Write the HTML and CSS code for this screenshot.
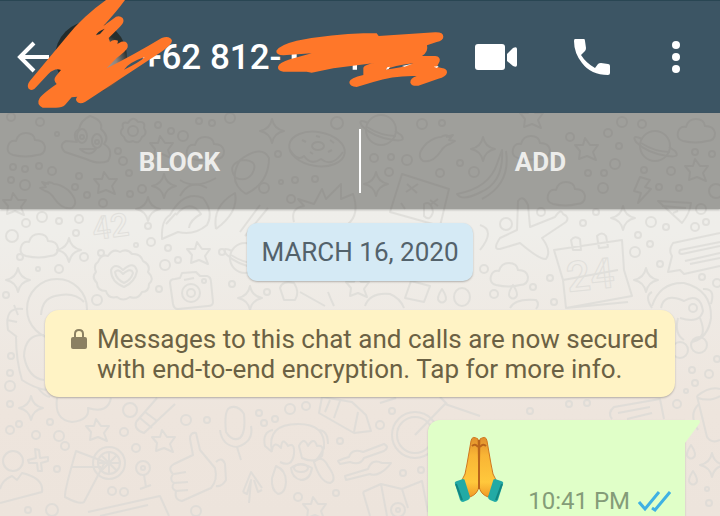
FILE: index.html
```html
<!DOCTYPE html>
<html lang="en">
<head>
    <meta charset="UTF-8">
    <meta name="viewport" content="width=device-width, initial-scale=1">
    <title>Chat</title>
    <link rel="stylesheet" href="styles.css">
</head>
<body>

<div class="screen">

    <!-- Wallpaper doodles -->
    <svg class="wallpaper" viewBox="0 0 720 516" preserveAspectRatio="xMidYMin slice" aria-hidden="true">
        <defs>
            <path id="star" d="M-2 -11 L3 -4 L11 -4 L6 3 L9 11 L0 7 L-8 10 L-7 2 L-12 -4 L-4 -4 Z"/>
            <path id="sparkle" d="M0 -12 Q2 -2 12 0 Q2 2 0 12 Q-2 2 -12 0 Q-2 -2 0 -12 Z"/>
            <path id="cloud" d="M-13 10 Q-20 8 -18 1 Q-16 -5 -10 -4 Q-8 -12 0 -12 Q8 -12 9 -5 Q18 -5 19 2 Q19 10 11 10 Q0 13 -13 10 Z"/>
            <g id="planet">
                <circle r="15"/>
                <path d="M-13 -7 Q-24 -12 -19 -4 Q-8 7 12 10 Q26 12 20 5 L14 1 M-14 -3 Q0 6 15 6"/>
            </g>
            <path id="eggplant" d="M-14 -10 Q-10 -16 -4 -12 Q2 -12 10 -6 Q22 6 14 12 Q4 14 -4 2 Q-8 -4 -13 -5 L-18 -8 L-12 -9 L-16 -14 L-9 -12"/>
            <path id="drop" d="M0 -7 Q6 2 3 5 Q0 8 -3 5 Q-6 2 0 -7 Z"/>
        </defs>

        <use href="#cloud" x="26" y="145"/>
        <use href="#cloud" x="531" y="148"/>
        <use href="#cloud" x="696" y="131"/>
        <use href="#cloud" x="566" y="194"/>
        <use href="#cloud" x="39" y="246"/>
        <use href="#cloud" x="509" y="275"/>
        <use href="#cloud" x="205" y="149"/>

        <use href="#star" x="106" y="183"/>
        <use href="#star" x="15" y="204"/>
        <use href="#star" x="162" y="147"/>
        <use href="#star" x="199" y="253"/>
        <use href="#star" x="587" y="149"/>
        <use href="#star" x="697" y="170"/>
        <use href="#star" x="532" y="117"/>
        <use href="#star" x="358" y="286"/>
        <use href="#star" x="98" y="430"/>
        <use href="#star" x="164" y="441"/>
        <use href="#star" x="315" y="508"/>

        <use href="#sparkle" x="164" y="186"/>
        <use href="#sparkle" x="148" y="209"/>
        <use href="#sparkle" x="272" y="131"/>
        <use href="#sparkle" x="376" y="184"/>
        <use href="#sparkle" x="483" y="149"/>
        <use href="#sparkle" x="69" y="250"/>
        <use href="#sparkle" x="18" y="280"/>
        <use href="#sparkle" x="250" y="298"/>
        <use href="#sparkle" x="623" y="218"/>
        <use href="#sparkle" x="646" y="280"/>
        <use href="#sparkle" x="31" y="408"/>
        <use href="#sparkle" x="712" y="465"/>

        <use href="#planet" x="381" y="130"/>
        <use href="#planet" x="655" y="146"/>
        <use href="#planet" x="245" y="258"/>
        <use href="#eggplant" x="58" y="196"/>
        <use href="#eggplant" transform="translate(437 149) scale(-1 1)"/>
        <use href="#drop" x="442" y="296"/>
        <use href="#drop" x="513" y="292"/>
        <use href="#drop" x="691" y="452"/>
        <use href="#drop" x="693" y="478"/>

        <!-- poop, flower -->
        <path d="M79 129 Q81 120 90 116 Q103 120 101 129 Q110 137 104 144 Q114 150 108 161 Q98 165 86 159 L65 152 Q58 145 66 141 L77 142 Q72 133 79 129 Z M80 149 Q90 158 96 149 Z"/>
        <ellipse cx="82" cy="136" rx="5" ry="7"/><ellipse cx="97" cy="141" rx="5" ry="7"/>
        <circle cx="82" cy="137" r="2"/><circle cx="97" cy="142" r="2"/>
        <circle cx="133" cy="131" r="5"/>
        <path d="M128 123 Q133 115 138 122 Q146 121 144 128 Q148 134 142 137 Q139 145 133 141 Q126 144 124 137 Q118 133 123 128 Q121 121 128 123 Z"/>

        <!-- rocket, leaf, splash -->
        <path d="M162 239 Q161 220 170 215 Q184 190 203 198 Q214 212 207 225 Q194 236 178 232 Z M166 224 L176 213 M180 196 Q190 178 207 188 M176 215 Q190 198 201 214 Q190 220 189 228"/>
        <path d="M216 229 Q212 206 235 193 Q239 212 216 229 M180 180 Q195 190 216 178"/>
        <path d="M294 222 Q290 208 304 206 L298 199 L314 204 L322 189 L326 199 L341 184 L341 199 L353 194 Q360 214 348 224"/>
        <path d="M246 194 Q227 182 240 160 Q262 144 269 158 Q269 183 246 194 M236 178 Q226 165 242 160 Q260 160 252 174 Q246 182 236 178"/>

        <!-- donut -->
        <ellipse cx="317" cy="149" rx="28" ry="17" transform="rotate(9 317 149)"/>
        <ellipse cx="318" cy="146" rx="6" ry="4"/>
        <path d="M290 150 Q298 162 304 156 Q311 166 321 159 Q332 168 343 152 M302 140 l4 2 M330 140 l4 3 M310 152 l3 2 M328 152 l4 -2 M316 136 l4 1"/>

        <!-- card, banana, bolt, pizza -->
        <path d="M402 174 L449 189 L440 226 L390 212 Z M407 184 l10 9 M418 184 l-12 8 M430 200 l8 6 M438 199 l-8 6 M401 203 l4 6 M424 204 Q431 200 433 212 Q430 222 424 216 Z"/>
        <path d="M502 150 Q504 182 481 192 Q462 202 457 194 Q489 188 497 164 Z M506 151 Q511 184 482 199"/>
        <path d="M640 177 L650 180 L645 187 L651 189 L638 203 L641 193 L634 191 Z"/>
        <path d="M658 201 L691 203 Q690 213 682 223 Z M662 206 L686 208 M673 213 l5 -2"/>

        <!-- 42 -->
        <text class="doodle-number" x="94" y="240" transform="rotate(-8 94 240)">42</text>

        <!-- badge with heart -->
        <path d="M98 262 Q101 254 108 256 Q113 248 120 252 Q127 248 132 254 Q140 253 143 261 Q151 265 148 272 Q155 279 149 284 Q149 292 142 292 Q138 300 130 297 Q123 302 117 297 Q108 299 106 291 Q97 291 97 283 Q91 277 96 272 Q93 265 98 262 Z"/>
        <path d="M123 270 Q134 260 137 271 Q135 282 124 287 Q111 282 111 270 Q115 262 123 270 Z M123 274 Q131 267 133 273 Q131 280 124 283 Q116 279 115 272 Q118 268 123 274 Z"/>

        <!-- camera -->
        <path d="M170 283 Q170 279 175 279 L180 278 L182 273 L196 272 L200 276 L207 276 Q211 277 211 282 L213 302 Q213 306 208 306 L178 309 Q174 309 173 304 Z M184 280 l10 -2"/>
        <circle cx="191" cy="293" r="9"/><circle cx="191" cy="293" r="4"/><circle cx="204" cy="281" r="2"/>

        <!-- astronaut -->
        <circle cx="57" cy="309" r="30"/>
        <path d="M41 315 Q42 299 55 296 Q74 291 84 302 M23 309 Q4 306 8 330 L17 337 M14 305 L18 315 M7 320 L17 322 M16 337 Q16 360 22 380 Q34 388 46 390 M44 335 Q25 334 24 356 Q28 378 44 380 M38 388 Q44 396 50 397"/>

        <!-- plane -->
        <path d="M518 201 Q523 194 528 205 L530 227 L555 217 Q561 208 563 214 Q570 217 566 222 L542 238 Q552 251 546 259 Q540 260 520 243 L500 249 Q492 250 500 238 L517 230 Z"/>

        <!-- calendar with 24 -->
        <path d="M554 250 L622 240 L624 270 L632 296 L566 308 L563 280 Z M563 280 L618 270 M571 240 Q575 235 580 239 L581 250 L573 250 Z M597 236 Q602 231 606 236 L608 247 L599 248 Z M566 308 L628 302"/>
        <text class="doodle-number doodle-number-big" x="568" y="292" transform="rotate(-6 568 292)">24</text>

        <!-- tickets -->
        <path d="M720 233 L673 243 Q668 250 672 256 L668 272 L680 270 L684 274 L720 266 M720 242 L680 250 Q678 254 682 254 L720 246 M720 253 L685 261 M690 264 L720 258"/>
        <path d="M612 419 Q607 413 614 407 L660 399 L664 419 M618 413 L650 407 M627 419 L652 413"/>

        <!-- monkeys -->
        <path d="M652 306 Q660 282 684 283 Q712 290 711 318 Q708 338 692 342 M661 308 Q664 292 684 301 Q700 292 703 311 Q700 324 680 318 M652 292 Q644 296 652 308 M703 289 Q716 288 711 304 M678 318 Q674 334 684 340 M700 318 Q708 338 694 340"/>
        <circle cx="693" cy="308" r="4"/><circle cx="699" cy="345" r="8"/><circle cx="680" cy="350" r="8"/>
        <path d="M272 452 Q266 424 298 424 Q326 424 324 448 Q318 460 313 462 M273 430 Q262 432 265 446 L272 452 M318 430 Q328 430 328 444 M272 450 Q274 440 281 448 Q282 436 288 446 Q295 442 294 454 Q292 468 280 462 M299 446 Q304 436 308 446 Q314 436 317 446 Q325 444 322 456 Q314 464 302 458 Z"/>
        <path d="M276 466 Q286 470 286 482 Q285 494 278 494 Q271 490 272 478 Z M314 462 Q322 454 328 466 Q338 480 330 483 Q320 482 314 462 Z M291 468 Q300 461 312 468 Q310 480 301 480 Q292 478 291 468 Z"/>
        <ellipse cx="301" cy="468" rx="7" ry="4"/>

        <!-- pens and brushes -->
        <path d="M322 397 L352 402 L366 415 L371 431 L354 433 L319 413 Z M330 400 L325 412 M358 412 L354 432 M340 401 L334 418"/>
        <path d="M136 422 Q134 430 144 433 L175 404 M136 422 L157 398 M140 418 L152 428 M145 412 L157 421"/>
        <path d="M338 461 Q344 458 349 457 Q352 448 363 452 L384 444 Q390 447 384 451 L364 458 Q360 466 350 462 L340 464 Z M345 476 L368 469 Q372 458 382 463 L391 463 Q386 470 380 473 Q374 476 370 474 L346 480 Z"/>

        <!-- blob, person, plus -->
        <path d="M57 398 Q54 420 72 422 Q90 420 88 408 Q108 414 111 398"/>
        <circle cx="13" cy="461" r="10"/>
        <path d="M0 503 L42 492 Q44 478 22 473 L17 480 L12 476 Q2 480 0 489 M35 449 L39 450 L40 458 L48 457 L48 461 L41 463 L42 471 L38 471 L37 463 L29 463 L28 460 L36 458 Z"/>

        <!-- juice -->
        <path d="M76 451 L105 462 L84 502 Q80 505 65 497 Q64 492 76 451 Z M72 467 L101 467"/>
        <circle cx="109" cy="463" r="16"/><circle cx="109" cy="463" r="11"/>
        <path d="M109 452 V474 M98 463 H120 M101 455 L117 471 M117 455 L101 471"/>
        <circle cx="143" cy="468" r="7"/><circle cx="143" cy="468" r="2"/><path d="M144 475 L146 487 M140 489 L151 485"/>

        <!-- thumb up -->
        <path d="M196 433 Q190 432 190 439 L193 455 L174 464 Q167 468 173 474 Q169 480 174 483 Q170 488 176 491 Q174 500 182 501 L211 488 Q218 480 215 468 L200 450 Z M174 474 L186 472 M174 483 L188 482 M176 491 L188 490 M216 462 Q222 456 225 464 L226 480 Q222 487 216 486"/>

        <!-- microphone, arrow -->
        <path d="M229 408 Q224 412 226 432 Q232 442 240 438 Q246 432 244 414 Q238 404 229 408 M220 430 Q222 446 237 447 Q254 442 251 426 M237 447 L241 460"/>
        <path d="M243 492 L251 472 L262 488 M243 492 L247 494 L251 480 L249 503 M254 480 L258 492 L262 490"/>

        <!-- pads and map -->
        <path d="M88 512 L160 496 L169 516 M100 516 L148 505"/>
        <path d="M363 492 L381 484 L402 489 L422 481 L428 512 M363 492 L370 516 M381 484 L387 516 M402 489 L408 508"/>
        <circle cx="398" cy="510" r="7"/><circle cx="398" cy="510" r="2"/>

        <!-- bicycle -->
        <circle cx="415" cy="435" r="23"/><circle cx="415" cy="435" r="18"/>
        <path d="M415 435 L445 404 L480 416 M380 403 L396 398 M447 404 L440 397"/>

        <!-- cup, tools -->
        <path d="M697 396 Q710 386 720 389 M697 396 L707 437 Q712 444 720 440 M698 398 Q710 402 720 396 M699 404 Q688 414 698 430"/>
        <path d="M280 288 Q282 280 294 283 Q300 292 295 300 L284 300 Z M300 292 L325 306 M328 292 Q331 300 334 306 M365 306 Q370 292 390 294 Q400 298 404 308 M411 281 L430 286 L424 302 L405 298 Z"/>
        <ellipse cx="462" cy="297" rx="8" ry="9"/>
        <path d="M510 308 Q515 298 536 300 Q540 304 536 309 M480 225 Q496 230 480 250 M240 232 L260 205 M245 236 L268 208"/>

        <!-- bubbles -->
        <circle cx="11" cy="117" r="4"/><circle cx="40" cy="122" r="4"/><circle cx="57" cy="134" r="2"/>
        <circle cx="158" cy="125" r="3"/><circle cx="171" cy="131" r="3"/><circle cx="183" cy="136" r="5"/>
        <circle cx="199" cy="121" r="3"/><circle cx="212" cy="123" r="3"/><circle cx="230" cy="118" r="5"/>
        <circle cx="13" cy="167" r="3"/><circle cx="25" cy="169" r="3"/><circle cx="39" cy="166" r="3"/>
        <circle cx="52" cy="171" r="4"/><circle cx="11" cy="180" r="3"/><circle cx="25" cy="185" r="5"/>
        <circle cx="79" cy="176" r="3"/><circle cx="75" cy="187" r="3"/><circle cx="87" cy="195" r="3"/>
        <circle cx="118" cy="151" r="3"/><circle cx="123" cy="161" r="4"/><circle cx="129" cy="173" r="3"/>
        <circle cx="142" cy="189" r="4"/><circle cx="130" cy="194" r="3"/><circle cx="103" cy="203" r="4"/>
        <circle cx="337" cy="123" r="6"/><circle cx="422" cy="124" r="5"/><circle cx="442" cy="123" r="3"/>
        <circle cx="374" cy="158" r="4"/><circle cx="391" cy="157" r="3"/><circle cx="407" cy="160" r="5"/>
        <circle cx="389" cy="172" r="4"/><circle cx="440" cy="173" r="4"/><circle cx="460" cy="163" r="3"/>
        <circle cx="474" cy="172" r="5"/><circle cx="264" cy="188" r="5"/><circle cx="281" cy="182" r="2"/>
        <circle cx="295" cy="180" r="3"/><circle cx="315" cy="179" r="3"/><circle cx="291" cy="199" r="4"/>
        <circle cx="278" cy="154" r="3"/><circle cx="622" cy="122" r="5"/><circle cx="642" cy="124" r="4"/>
        <circle cx="570" cy="137" r="4"/><circle cx="608" cy="133" r="4"/><circle cx="619" cy="146" r="3"/>
        <circle cx="695" cy="152" r="3"/><circle cx="712" cy="154" r="3"/><circle cx="615" cy="164" r="5"/>
        <circle cx="588" cy="173" r="3"/><circle cx="604" cy="173" r="3"/><circle cx="644" cy="170" r="3"/>
        <circle cx="671" cy="171" r="4"/><circle cx="603" cy="188" r="5"/><circle cx="659" cy="187" r="3"/>
        <circle cx="679" cy="188" r="3"/><circle cx="716" cy="191" r="7"/><circle cx="701" cy="209" r="5"/>
        <circle cx="42" cy="217" r="5"/><circle cx="26" cy="223" r="4"/><circle cx="12" cy="236" r="6"/>
        <circle cx="59" cy="221" r="3"/><circle cx="79" cy="219" r="4"/><circle cx="76" cy="233" r="3"/>
        <circle cx="84" cy="257" r="4"/><circle cx="101" cy="253" r="3"/><circle cx="136" cy="245" r="2"/>
        <circle cx="151" cy="242" r="4"/><circle cx="168" cy="248" r="3"/><circle cx="148" cy="226" r="3"/>
        <circle cx="178" cy="260" r="3"/><circle cx="165" cy="265" r="5"/><circle cx="222" cy="252" r="3"/>
        <circle cx="232" cy="284" r="3"/><circle cx="159" cy="289" r="3"/><circle cx="97" cy="300" r="5"/>
        <circle cx="59" cy="269" r="4"/><circle cx="38" cy="269" r="2"/><circle cx="20" cy="257" r="3"/>
        <circle cx="6" cy="295" r="3"/><circle cx="506" cy="224" r="6"/><circle cx="541" cy="212" r="4"/>
        <circle cx="583" cy="223" r="3"/><circle cx="596" cy="212" r="3"/><circle cx="651" cy="222" r="5"/>
        <circle cx="666" cy="227" r="3"/><circle cx="695" cy="227" r="4"/><circle cx="706" cy="222" r="3"/>
        <circle cx="638" cy="235" r="3"/><circle cx="650" cy="244" r="3"/><circle cx="635" cy="252" r="5"/>
        <circle cx="660" cy="264" r="3"/><circle cx="702" cy="277" r="3"/><circle cx="717" cy="283" r="4"/>
        <circle cx="533" cy="287" r="3"/><circle cx="550" cy="278" r="3"/><circle cx="554" cy="302" r="3"/>
        <circle cx="494" cy="294" r="4"/><circle cx="267" cy="292" r="3"/><circle cx="484" cy="269" r="4"/>
        <circle cx="11" cy="356" r="3"/><circle cx="10" cy="373" r="3"/><circle cx="10" cy="386" r="5"/>
        <circle cx="10" cy="404" r="3"/><circle cx="19" cy="424" r="3"/><circle cx="10" cy="430" r="4"/>
        <circle cx="36" cy="435" r="4"/><circle cx="50" cy="422" r="3"/><circle cx="59" cy="436" r="5"/>
        <circle cx="65" cy="446" r="4"/><circle cx="130" cy="410" r="7"/><circle cx="124" cy="432" r="4"/>
        <circle cx="136" cy="448" r="4"/><circle cx="186" cy="420" r="5"/><circle cx="207" cy="420" r="3"/>
        <circle cx="57" cy="469" r="3"/><circle cx="112" cy="491" r="4"/><circle cx="124" cy="492" r="4"/>
        <circle cx="52" cy="510" r="6"/><circle cx="28" cy="510" r="3"/><circle cx="196" cy="511" r="5"/>
        <circle cx="259" cy="413" r="3"/><circle cx="264" cy="423" r="3"/><circle cx="275" cy="419" r="3"/>
        <circle cx="290" cy="409" r="5"/><circle cx="306" cy="406" r="4"/><circle cx="380" cy="425" r="4"/>
        <circle cx="392" cy="411" r="3"/><circle cx="340" cy="441" r="3"/><circle cx="298" cy="497" r="4"/>
        <circle cx="336" cy="493" r="3"/><circle cx="403" cy="473" r="3"/><circle cx="421" cy="470" r="3"/>
        <circle cx="569" cy="404" r="3"/><circle cx="587" cy="403" r="3"/><circle cx="530" cy="411" r="3"/>
        <circle cx="692" cy="370" r="3"/><circle cx="709" cy="374" r="4"/><circle cx="695" cy="383" r="3"/>
        <circle cx="686" cy="391" r="2"/><circle cx="677" cy="404" r="4"/><circle cx="717" cy="359" r="3"/>
        <circle cx="709" cy="503" r="3"/><circle cx="707" cy="489" r="2"/>
    </svg>

    <header class="topbar">
        <button class="icon-btn back" type="button" aria-label="Back">
            <svg width="34" height="34" viewBox="0 0 34 34"><path d="M34 17 H4 M19 3 L5 17 L19 31" fill="none" stroke="#fff" stroke-width="4"/></svg>
        </button>
        <div class="avatar"></div>
        <h1 class="contact">+62 812-</h1>
        <button class="icon-btn" type="button" aria-label="Video call">
            <svg width="42" height="28" viewBox="0 0 42 28"><rect x="0" y="1" width="30" height="26" rx="3" fill="#fff"/><path d="M32 11 L38 5 Q42 3 42 6 V22 Q42 25 38 23 L32 18 Z" fill="#fff"/></svg>
        </button>
        <button class="icon-btn call" type="button" aria-label="Voice call">
            <svg width="36" height="38" viewBox="0 0 36 38"><path d="M1 1 H10 Q11 1 11 3 L12 10 Q12 12 11 13 L7 17 Q12 25 21 30 L24 26 Q25 25 27 25 L34 26 Q36 26 36 28 V35 Q36 37 34 37 Q17 37 8 25 Q0 15 0 3 Q0 1 1 1 Z" fill="#fff"/></svg>
        </button>
        <button class="icon-btn more" type="button" aria-label="More options">
            <svg width="8" height="34" viewBox="0 0 8 34"><circle cx="4" cy="5" r="4" fill="#fff"/><circle cx="4" cy="17" r="4" fill="#fff"/><circle cx="4" cy="29" r="4" fill="#fff"/></svg>
        </button>

        <!-- marker strokes over the avatar and the number -->
        <svg class="marker" viewBox="0 0 2160 339" aria-hidden="true">
            <path fill="#fff" d="M875 160 H890 V180 H875 Z M1058 195 H1071 V209 H1058 Z"/>
            <path fill="#ff7729" fill-rule="evenodd" d="M318 0 H375 Q352 32 310 78 L340 56 Q355 43 368 54 Q376 66 360 80 L326 114 L330 126 Q340 116 354 122 L352 132 L364 125 Q386 122 383 142 Q380 152 350 174 L320 205 Q400 165 485 114 Q510 106 516 122 Q516 134 480 158 L255 306 Q236 316 228 300 Q228 292 232 290 L215 292 L195 315 Q185 325 160 323 H128 Q108 312 118 296 Q124 284 170 252 Q158 240 168 228 L183 210 Q165 203 145 222 L108 262 Q98 276 86 266 Q79 256 90 242 L200 110 Q250 48 318 0 Z M288 106 Q292 94 314 86 L300 102 Z M372 209 Q385 188 434 171 Q420 186 372 209 Z"/>
            <path fill="#ff7729" d="M829 152 Q838 135 890 122 Q1000 102 1090 100 H1130 L1136 108 L1305 97 Q1330 96 1330 110 Q1330 122 1310 126 L1281 136 Q1286 156 1266 168 H1306 Q1322 170 1319 184 L1312 198 Q1310 202 1325 204 Q1342 206 1341 218 Q1338 230 1315 236 L1255 257 Q1236 260 1231 248 Q1230 234 1250 228 Q1180 226 1120 246 L1070 261 Q1048 260 1048 246 Q1050 234 1090 225 V203 Q1094 192 1130 188 L1000 205 L935 218 L920 215 H850 Q832 212 834 200 Q838 188 870 178 L935 160 L850 166 Q828 165 829 152 Z"/>
            <path fill="#3c5564" d="M1156 209 Q1180 197 1240 190 Q1205 204 1156 209 Z"/>
            <path fill="#fff" d="M1158 209 L1162 202 L1170 200 L1166 207 Z M1206 198 L1237 191 L1214 200 Z M1301 200 L1316 198 L1311 204 Z"/>
        </svg>
    </header>

    <div class="actions">
        <button class="action" type="button">BLOCK</button>
        <button class="action" type="button">ADD</button>
    </div>

    <main class="chat">
        <div class="date">MARCH 16, 2020</div>

        <div class="notice">
            <svg class="lock" width="16" height="22" viewBox="0 0 16 22" aria-hidden="true"><rect x="0" y="9" width="16" height="12" rx="2" fill="#8b8062"/><path d="M4 10 V6 Q4 2 8 2 Q12 2 12 6 V10" fill="none" stroke="#8b8062" stroke-width="2"/></svg>
            <p>Messages to this chat and calls are now secured with end-to-end encryption. Tap for more info.</p>
        </div>

        <div class="bubble">
            <svg class="tail" width="16" height="24" viewBox="0 0 16 24" aria-hidden="true"><path d="M0 0 H14 Q16 1 14 4 L0 23 Z" fill="#e0ffc8"/></svg>
            <svg class="emoji" width="50" height="68" viewBox="0 0 50 68" role="img" aria-label="Folded hands">
                <defs>
                    <linearGradient id="skin" x1="0" y1="0" x2="0" y2="1">
                        <stop offset="0" stop-color="#e0902c"/>
                        <stop offset=".3" stop-color="#f9b535"/>
                        <stop offset=".75" stop-color="#ffc83c"/>
                        <stop offset="1" stop-color="#f09a26"/>
                    </linearGradient>
                </defs>
                <path d="M24 3 Q18 -1 17 5 L13 28 Q12 39 7 46 L16 61 Q24 58 25 50 Z" fill="url(#skin)" stroke="#d0771f" stroke-width="1"/>
                <path d="M26 3 Q32 -1 33 5 L37 28 Q38 39 43 46 L34 61 Q26 58 25 50 Z" fill="url(#skin)" stroke="#d0771f" stroke-width="1"/>
                <path d="M25 4 V53 M18 10 Q21 7 24 11 M32 10 Q29 7 26 11" fill="none" stroke="#b9651b" stroke-width="2"/>
                <path d="M1 48 Q0 46 3 45 L9 43 Q11 43 11 45 L16 61 Q16 63 14 64 L9 66 Q7 66 6 64 Z" fill="#22aaa5"/>
                <path d="M49 48 Q50 46 47 45 L41 43 Q39 43 39 45 L34 61 Q34 63 36 64 L41 66 Q43 66 44 64 Z" fill="#22aaa5"/>
                <path d="M2 48 L8 64 M48 48 L42 64" stroke="#128580" stroke-width="2"/>
            </svg>
            <div class="meta">
                <time>10:41 PM</time>
                <svg width="33" height="22" viewBox="0 0 33 22" role="img" aria-label="Read"><path d="M1 12 L7 19 L21 2 M14 18 L17 20 L32 2" fill="none" stroke="#3fb1e3" stroke-width="3"/></svg>
            </div>
        </div>
    </main>

</div>

</body>
</html>
```
FILE: styles.css
```css
* {
    box-sizing: border-box;
}
body {
    margin: 0;
    font-family: Roboto, "Liberation Sans", sans-serif;
}
button {
    padding: 0;
    border: none;
    background: none;
    font-family: inherit;
    cursor: pointer;
}
svg {
    display: block;
}
.screen {
    position: relative;
    height: 100vh;
    overflow: hidden;
    background: linear-gradient(#efefec 0, #efeeea 45%, #eee5dd 80%, #ede4dc 100%);
}

/* wallpaper */
.wallpaper {
    position: absolute;
    top: 0;
    left: 0;
    width: 100%;
    height: 100%;
    fill: none;
    stroke: #dbdad6;
    stroke-width: 2;
    stroke-linejoin: round;
    opacity: 0.7;
}
.doodle-number {
    font-size: 32px;
    font-weight: 500;
    stroke-width: 1;
}
.doodle-number-big {
    font-size: 42px;
}

/* top bar */
.topbar {
    position: relative;
    display: flex;
    align-items: center;
    height: 113px;
    padding: 0 40px 0 15px;
    background: #3c5564;
    border-top: 1px solid #294653;
}
.icon-btn {
    flex: none;
}
.avatar {
    flex: none;
    width: 72px;
    height: 72px;
    margin: 0 15px 0 6px;
    border-radius: 50%;
    background: radial-gradient(circle at 60% 60%, #b9aaa2 0, #8d8580 30%, #28302f 50%, #1c2526 100%);
}
.contact {
    flex: 1;
    margin: 0;
    color: #fff;
    font-size: 35px;
    font-weight: 500;
    white-space: nowrap;
}
.call {
    margin-left: 57px;
}
.more {
    margin-left: 62px;
}
.marker {
    position: absolute;
    top: -1px;
    left: 0;
    width: 720px;
    height: 113px;
}

/* block / add */
.actions {
    position: relative;
    display: flex;
    height: 96px;
    padding: 16px 0;
    background: rgba(80, 80, 76, 0.5);
    box-shadow: 0 1px 2px rgba(0, 0, 0, 0.25);
}
.action {
    flex: 1;
    padding-top: 2px;
    color: #ededeb;
    font-size: 26px;
    font-weight: 700;
}
.action + .action {
    border-left: 2px solid #fff;
}

/* messages */
.chat {
    position: relative;
    display: flex;
    flex-direction: column;
    align-items: center;
    padding: 14px 35px 0 45px;
}
.date {
    margin-right: 10px;
    padding: 14px;
    border-radius: 10px;
    background: #d5eaf5;
    box-shadow: 0 1px 2px rgba(0, 0, 0, 0.25);
    color: #53626b;
    font-size: 26px;
    line-height: 30px;
}
.notice {
    display: flex;
    align-items: flex-start;
    gap: 10px;
    align-self: stretch;
    margin: 29px 10px 0 0;
    padding: 14px 10px 13px 26px;
    border-radius: 14px;
    background: #fff3c5;
    box-shadow: 0 1px 2px rgba(0, 0, 0, 0.25);
    color: #6b6144;
    font-size: 26px;
    line-height: 30px;
}
.notice p {
    margin: 0;
}
.lock {
    flex: none;
    margin-top: 4px;
}
.bubble {
    position: relative;
    display: flex;
    align-self: flex-end;
    justify-content: space-between;
    width: 257px;
    height: 108px;
    margin-top: 23px;
    padding: 16px 14px 0 26px;
    border-radius: 12px 0 12px 12px;
    background: #e0ffc8;
    box-shadow: 0 1px 2px rgba(0, 0, 0, 0.2);
}
.tail {
    position: absolute;
    top: 0;
    left: 100%;
}
.meta {
    display: flex;
    align-items: center;
    gap: 8px;
    height: 30px;
    margin-top: 50px;
    color: #849c78;
    font-size: 24px;
    line-height: 30px;
}
```
